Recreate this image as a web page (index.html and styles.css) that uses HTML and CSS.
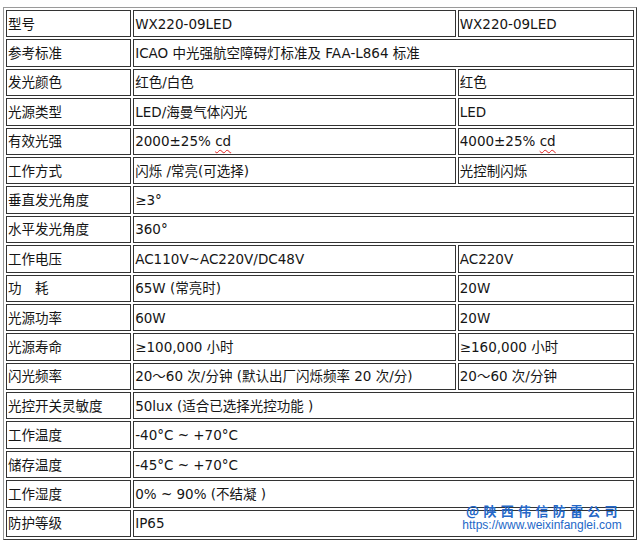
FILE: index.html
```html
<!DOCTYPE html>
<html lang="zh-CN">
<head>
<meta charset="utf-8">
<title>WX220-09LED 参数</title>
<link rel="stylesheet" href="styles.css">
</head>
<body>
<table class="spec">
  <tr><td class="c1">型号</td><td class="c2">WX220-09LED</td><td class="c3">WX220-09LED</td></tr>
  <tr><td>参考标准</td><td colspan="2">ICAO 中光强航空障碍灯标准及 FAA-L864 标准</td></tr>
  <tr><td>发光颜色</td><td>红色/白色</td><td>红色</td></tr>
  <tr><td>光源类型</td><td>LED/海曼气体闪光</td><td>LED</td></tr>
  <tr><td>有效光强</td><td>2000±25% <span class="spell">cd</span></td><td>4000±25% <span class="spell">cd</span></td></tr>
  <tr><td>工作方式</td><td>闪烁 /常亮(可选择)</td><td>光控制闪烁</td></tr>
  <tr><td>垂直发光角度</td><td colspan="2">≥3°</td></tr>
  <tr><td>水平发光角度</td><td colspan="2">360°</td></tr>
  <tr><td>工作电压</td><td>AC110V~AC220V/DC48V</td><td>AC220V</td></tr>
  <tr><td>功　耗</td><td>65W (常亮时)</td><td>20W</td></tr>
  <tr><td>光源功率</td><td>60W</td><td>20W</td></tr>
  <tr><td>光源寿命</td><td>≥100,000 小时</td><td>≥160,000 小时</td></tr>
  <tr><td>闪光频率</td><td>20～60 次/分钟 (默认出厂闪烁频率 20 次/分)</td><td>20～60 次/分钟</td></tr>
  <tr><td>光控开关灵敏度</td><td colspan="2">50lux (适合已选择光控功能 )</td></tr>
  <tr><td>工作温度</td><td colspan="2">-40°C ~ +70°C</td></tr>
  <tr><td>储存温度</td><td colspan="2">-45°C ~ +70°C</td></tr>
  <tr><td>工作湿度</td><td colspan="2">0% ~ 90% (不结凝 )</td></tr>
  <tr><td>防护等级</td><td colspan="2">IP65</td></tr>
</table>
<div class="wm">
  <div class="wm-name">@陕西伟信防雷公司</div>
  <div class="wm-url">https://www.weixinfanglei.com</div>
</div>
</body>
</html>
```

FILE: styles.css
```css
html, body {
  background: #ffffff;
}
body {
  margin: 7px 0 0 3px;
  font-family: "DejaVu Sans", "Noto Sans CJK SC", sans-serif;
  font-size: 13.5px;
  color: #151515;
}
.spec {
  box-sizing: border-box;
  width: 634px;
  table-layout: fixed;
  border-collapse: separate;
  border-spacing: 2px;
  border: 1px solid;
  border-color: #9a9a9a #3c3c3c #3c3c3c #9a9a9a;
}
.spec td {
  box-sizing: border-box;
  height: 27.4px;
  padding: 0 1px;
  border: 1px solid #333333;
  vertical-align: middle;
  white-space: nowrap;
  overflow: hidden;
  line-height: 16px;
}
.spec td.c1 { width: 125px; }
.spec td.c2 { width: 322px; }
.spec td.c3 { width: 176px; }
.spell {
  text-decoration: underline wavy #e02020;
  text-decoration-thickness: 1px;
  text-underline-offset: 3px;
}
.wm {
  position: absolute;
  left: 457px;
  top: 504px;
  width: 170px;
  text-align: center;
  color: #2468c8;
  font-family: "Liberation Sans", "Noto Sans CJK SC", sans-serif;
  display: flex;
  flex-direction: column;
  gap: 2px;
}
.wm-name {
  font-family: "Noto Sans CJK SC", sans-serif;
  font-size: 13px;
  font-weight: 700;
  letter-spacing: 4.3px;
  line-height: 13px;
  padding-left: 4px;
}
.wm-url {
  font-size: 12px;
  line-height: 13px;
}
```
